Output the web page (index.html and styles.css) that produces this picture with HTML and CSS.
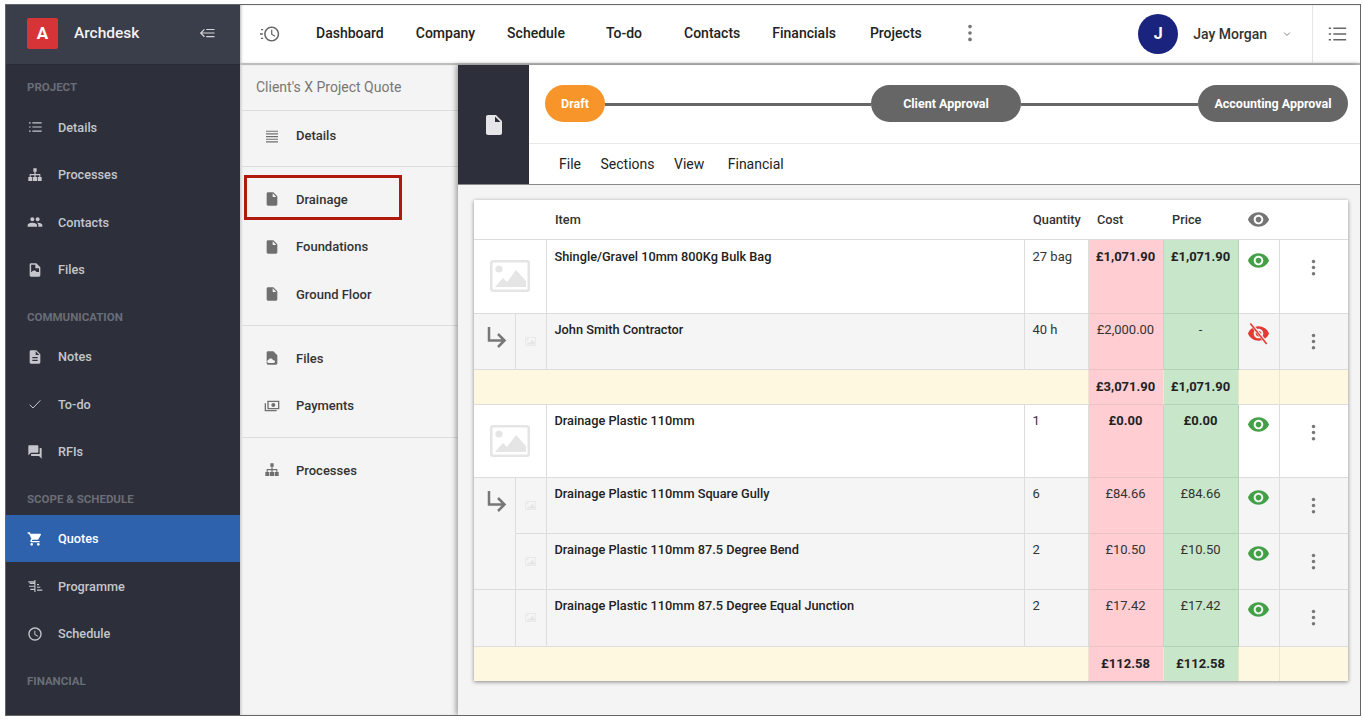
FILE: index.html
```html
<!DOCTYPE html>
<html lang="en">
<head>
    <meta charset="UTF-8">
    <meta name="viewport" content="width=device-width, initial-scale=1.0">
    <title>Archdesk - Quotes</title>
    <link rel="stylesheet" href="styles.css">
</head>
<body>
    <!-- Icon sprite -->
    <svg class="sprite" xmlns="http://www.w3.org/2000/svg">
        <symbol id="i-list" viewBox="0 0 24 24"><path d="M3 5h2.500v1.600H3zM3 11.200h2.500v1.600H3zM3 17.400h2.500V19H3zM8 5h14v1.600H8zM8 11.200h14v1.600H8zM8 17.400h14V19H8z"/></symbol>
        <symbol id="i-lines" viewBox="0 0 24 24"><path d="M3 4h18v1.700H3zM3 8h18v1.700H3zM3 12h18v1.700H3zM3 16h18v1.700H3zM3 20h18v1.700H3z"/></symbol>
        <symbol id="i-org" viewBox="0 0 24 24"><path d="M9.500 2h5v5h-1.600v3.500H20V15h2v6h-6v-6h2.500v-2.800h-5.600V15H15v6H9v-6h2.100v-2.800H5.500V15H8v6H2v-6h2v-4.500h7.100V7H9.500z"/></symbol>
        <symbol id="i-people" viewBox="0 0 24 24"><path d="M16 11c1.660 0 2.990-1.340 2.990-3S17.660 5 16 5c-1.660 0-3 1.340-3 3s1.340 3 3 3zm-8 0c1.660 0 2.990-1.340 2.990-3S9.660 5 8 5C6.340 5 5 6.340 5 8s1.340 3 3 3zm0 2c-2.330 0-7 1.170-7 3.500V19h14v-2.500c0-2.330-4.670-3.500-7-3.500zm8 0c-.29 0-.62.02-.97.05 1.160.84 1.970 1.970 1.970 3.450V19h6v-2.500c0-2.330-4.670-3.500-7-3.500z"/></symbol>
        <symbol id="i-doc" viewBox="0 0 24 24"><path d="M6 2c-1.100 0-1.990.9-1.990 2L4 20c0 1.100.89 2 1.990 2H18c1.100 0 2-.9 2-2V8l-6-6H6zm7 7V3.500L18.500 9H13z"/></symbol>
        <symbol id="i-file-cloud" viewBox="0 0 24 24"><path fill-rule="evenodd" d="M6 2c-1.100 0-2 .9-2 2v16c0 1.100.9 2 2 2h12c1.100 0 2-.9 2-2V8l-6-6H6zm1 17.500c-1.400 0-2.300-1-2.300-2.200 0-1.100.8-2 1.900-2.200.5-1.400 1.800-2.400 3.400-2.400 1.500 0 2.800.9 3.300 2.200 1.800 0 3.300 1.100 3.300 2.500 0 1.200-1 2.100-2.300 2.100H7z"/></symbol>
        <symbol id="i-file-cloud-dark" viewBox="0 0 24 24"><path fill-rule="evenodd" d="M6 2c-1.100 0-2 .9-2 2v16c0 1.100.9 2 2 2h12c1.100 0 2-.9 2-2V8l-6-6H6zm.2 2h6.300v5.500H18V15H6.200z"/><path d="M7.500 20c-1.500 0-2.500-1-2.500-2.300 0-1.200.9-2.100 2-2.300.5-1.500 2-2.600 3.700-2.600 1.700 0 3.100 1 3.600 2.400 1.800 0 3.400 1.100 3.400 2.600 0 1.300-1.100 2.200-2.400 2.200z"/></symbol>
        <symbol id="i-notes" viewBox="0 0 24 24"><path d="M14 2H6c-1.100 0-1.990.9-1.990 2L4 20c0 1.100.89 2 1.990 2H18c1.100 0 2-.9 2-2V8l-6-6zm2 16H8v-2h8v2zm0-4H8v-2h8v2zm-3-5V3.500L18.500 9H13z"/></symbol>
        <symbol id="i-check" viewBox="0 0 24 24"><path d="M4 13l5 5L20 6.500" fill="none" stroke="currentColor" stroke-width="1.500"/></symbol>
        <symbol id="i-forum" viewBox="0 0 24 24"><path d="M21 6h-2v9H6v2c0 .55.45 1 1 1h11l4 4V7c0-.55-.45-1-1-1zm-4 6V3c0-.55-.45-1-1-1H3c-.55 0-1 .45-1 1v14l4-4h10c.55 0 1-.45 1-1z"/></symbol>
        <symbol id="i-cart" viewBox="0 0 24 24"><path d="M7 18c-1.100 0-1.990.9-1.990 2S5.900 22 7 22s2-.9 2-2-.9-2-2-2zM1 2v2h2l3.600 7.590-1.350 2.450c-.16.28-.25.61-.25.96 0 1.100.9 2 2 2h12v-2H7.420c-.14 0-.25-.11-.25-.25l.03-.12.9-1.630h7.450c.75 0 1.410-.41 1.750-1.030l3.580-6.490c.08-.14.12-.31.12-.48 0-.55-.45-1-1-1H5.210l-.94-2H1zm16 16c-1.100 0-1.990.9-1.990 2s.89 2 1.990 2 2-.9 2-2-.9-2-2-2z"/></symbol>
        <symbol id="i-programme" viewBox="0 0 24 24"><path d="M2 5h9V3h1.700v18H11v-3H5v-1.700h6v-3H3V11.600h8V9H4V7.300h7V6.700H2zM15 9h3v1.700h-3zM15 13h5v1.700h-5zM15 17.300h8V19h-8z"/></symbol>
        <symbol id="i-clock" viewBox="0 0 24 24"><path d="M11.990 2C6.470 2 2 6.480 2 12s4.470 10 9.990 10C17.520 22 22 17.520 22 12S17.520 2 11.990 2zM12 20c-4.420 0-8-3.580-8-8s3.580-8 8-8 8 3.580 8 8-3.580 8-8 8zm.5-13H11v6l5.250 3.150.75-1.230-4.500-2.670z"/></symbol>
        <symbol id="i-history" viewBox="0 0 24 24"><path d="M14 3c-5 0-9 4-9 9s4 9 9 9 9-4 9-9-4-9-9-9zm0 16.200c-4 0-7.200-3.200-7.200-7.200S10 4.800 14 4.800s7.200 3.200 7.200 7.200-3.200 7.200-7.200 7.200zm.8-12.200h-1.500v5.700l4.300 2.600.8-1.200-3.600-2.100zM0 11.200h3.500v1.600H0zM1.200 6h2.600v1.600H1.200zM1.200 16.400h2.600V18H1.200z"/></symbol>
        <symbol id="i-collapse" viewBox="0 0 24 24"><path d="M8 6.500L2.500 12 8 17.500l1.100-1.100L5.500 12.800H22v-1.600H5.500l3.600-3.600zM11 6.500h11v1.600H11zM11 15.900h11v1.600H11z"/></symbol>
        <symbol id="i-payments" viewBox="0 0 24 24"><path fill-rule="evenodd" d="M5 4h18v13H5zm9 3.500a3 3 0 1 0 0 6 3 3 0 0 0 0-6zM7 6v9h14V6zM1 8h2v10h16v2H1z"/></symbol>
        <symbol id="i-eye" viewBox="0 0 24 24"><path d="M12 4.500C7 4.500 2.730 7.610 1 12c1.730 4.390 6 7.500 11 7.500s9.270-3.110 11-7.500c-1.730-4.390-6-7.500-11-7.500zM12 17c-2.760 0-5-2.240-5-5s2.240-5 5-5 5 2.240 5 5-2.240 5-5 5zm0-8c-1.660 0-3 1.340-3 3s1.340 3 3 3 3-1.340 3-3-1.340-3-3-3z"/></symbol>
        <symbol id="i-eye-off" viewBox="0 0 24 24"><path d="M12 4.500C7 4.500 2.730 7.610 1 12c1.730 4.390 6 7.500 11 7.500s9.270-3.110 11-7.500c-1.730-4.390-6-7.500-11-7.500zM12 17c-2.760 0-5-2.240-5-5s2.240-5 5-5 5 2.240 5 5-2.240 5-5 5zm0-8c-1.660 0-3 1.340-3 3s1.340 3 3 3 3-1.340 3-3-1.340-3-3-3z"/><path d="M4 1.500L21 23" stroke="#f5f5f5" stroke-width="3.400"/><path d="M3.500 1.500L20.500 23" stroke="currentColor" stroke-width="1.700"/></symbol>
        <symbol id="i-dots" viewBox="0 0 24 24"><circle cx="12" cy="5" r="2"/><circle cx="12" cy="12" r="2"/><circle cx="12" cy="19" r="2"/></symbol>
        <symbol id="i-chevron" viewBox="0 0 24 24"><path d="M5 8.500l7 7 7-7" fill="none" stroke="currentColor" stroke-width="2.200"/></symbol>
        <symbol id="i-image" viewBox="0 0 40 32"><path fill-rule="evenodd" d="M3 0h34a3 3 0 0 1 3 3v26a3 3 0 0 1-3 3H3a3 3 0 0 1-3-3V3a3 3 0 0 1 3-3zm0 2.500a.5.5 0 0 0-.5.5v26a.5.5 0 0 0 .5.500h34a.5.500 0 0 0 .5-.5V3a.5.500 0 0 0-.5-.5z"/><circle cx="9" cy="9" r="3.600"/><path d="M5 27l8-9 4 4 9-12 10 11v6z"/></symbol>
        <symbol id="i-arrow" viewBox="0 0 20 22"><path d="M2 1v13.500h15M11 8l6.500 6.500L11 21" fill="none" stroke="currentColor" stroke-width="2.500"/></symbol>
    </svg>

    <div class="frame">
        <!-- Left navigation -->
        <aside class="sidebar">
            <div class="brand">
                <div class="brand-logo">A</div>
                <div class="brand-name">Archdesk</div>
                <svg class="brand-collapse"><use href="#i-collapse"/></svg>
            </div>
            <nav>
                <div class="nav-label nav-label-first">Project</div>
                <a class="nav-item"><svg class="nav-icon"><use href="#i-list"/></svg>Details</a>
                <a class="nav-item"><svg class="nav-icon"><use href="#i-org"/></svg>Processes</a>
                <a class="nav-item"><svg class="nav-icon"><use href="#i-people"/></svg>Contacts</a>
                <a class="nav-item"><svg class="nav-icon"><use href="#i-file-cloud-dark"/></svg>Files</a>
                <div class="nav-label">Communication</div>
                <a class="nav-item"><svg class="nav-icon"><use href="#i-notes"/></svg>Notes</a>
                <a class="nav-item"><svg class="nav-icon"><use href="#i-check"/></svg>To-do</a>
                <a class="nav-item"><svg class="nav-icon"><use href="#i-forum"/></svg>RFIs</a>
                <div class="nav-label">Scope &amp; Schedule</div>
                <a class="nav-item nav-item-active"><svg class="nav-icon"><use href="#i-cart"/></svg>Quotes</a>
                <a class="nav-item"><svg class="nav-icon"><use href="#i-programme"/></svg>Programme</a>
                <a class="nav-item"><svg class="nav-icon"><use href="#i-clock"/></svg>Schedule</a>
                <div class="nav-label">Financial</div>
            </nav>
        </aside>

        <div class="content">
            <!-- Top bar -->
            <header class="topbar">
                <svg class="topbar-history"><use href="#i-history"/></svg>
                <a class="top-link">Dashboard</a>
                <a class="top-link">Company</a>
                <a class="top-link">Schedule</a>
                <a class="top-link top-link-wide">To-do</a>
                <a class="top-link">Contacts</a>
                <a class="top-link">Financials</a>
                <a class="top-link top-link-last">Projects</a>
                <svg class="topbar-dots"><use href="#i-dots"/></svg>
                <div class="user">
                    <div class="user-avatar">J</div>
                    <div class="user-name">Jay Morgan</div>
                    <svg class="user-chevron"><use href="#i-chevron"/></svg>
                </div>
                <div class="topbar-menu"><svg><use href="#i-list"/></svg></div>
            </header>

            <div class="workspace">
                <!-- Quote sections -->
                <div class="panel">
                    <div class="panel-title">Client's X Project Quote</div>
                    <div class="panel-group panel-group-single">
                        <a class="panel-item"><svg class="panel-icon"><use href="#i-lines"/></svg>Details</a>
                    </div>
                    <div class="panel-group panel-group-sections">
                        <a class="panel-item panel-item-marked"><svg class="panel-icon"><use href="#i-doc"/></svg>Drainage</a>
                        <a class="panel-item"><svg class="panel-icon"><use href="#i-doc"/></svg>Foundations</a>
                        <a class="panel-item"><svg class="panel-icon"><use href="#i-doc"/></svg>Ground Floor</a>
                    </div>
                    <div class="panel-group">
                        <a class="panel-item"><svg class="panel-icon"><use href="#i-file-cloud"/></svg>Files</a>
                        <a class="panel-item"><svg class="panel-icon"><use href="#i-payments"/></svg>Payments</a>
                    </div>
                    <div class="panel-group panel-group-last">
                        <a class="panel-item"><svg class="panel-icon"><use href="#i-org"/></svg>Processes</a>
                    </div>
                </div>

                <main class="main">
                    <div class="quote-head">
                        <div class="quote-badge"><svg><use href="#i-doc"/></svg></div>
                        <div class="quote-bars">
                            <div class="stepper">
                                <div class="step step-draft">Draft</div>
                                <div class="step-line step-line-long"></div>
                                <div class="step">Client Approval</div>
                                <div class="step-line"></div>
                                <div class="step">Accounting Approval</div>
                            </div>
                            <div class="menu">
                                <a>File</a>
                                <a>Sections</a>
                                <a class="menu-view">View</a>
                                <a>Financial</a>
                            </div>
                        </div>
                    </div>

                    <div class="card">
                        <table class="quote-table">
                            <colgroup>
                                <col class="col-indent"><col class="col-thumb"><col class="col-item"><col class="col-qty">
                                <col class="col-money"><col class="col-money"><col class="col-eye"><col class="col-more">
                            </colgroup>
                            <thead>
                                <tr>
                                    <th colspan="2"></th>
                                    <th>Item</th>
                                    <th>Quantity</th>
                                    <th>Cost</th>
                                    <th>Price</th>
                                    <th class="head-eye"><svg class="icon-eye icon-grey"><use href="#i-eye"/></svg></th>
                                    <th></th>
                                </tr>
                            </thead>
                            <tbody>
                                <tr class="row-main row-74">
                                    <td colspan="2" class="thumb-cell"><svg class="thumb-big"><use href="#i-image"/></svg></td>
                                    <td class="item-name">Shingle/Gravel 10mm 800Kg Bulk Bag</td>
                                    <td>27 bag</td>
                                    <td class="cost strong">£1,071.90</td>
                                    <td class="price strong">£1,071.90</td>
                                    <td class="eye-cell"><svg class="icon-eye icon-green"><use href="#i-eye"/></svg></td>
                                    <td class="more-cell"><svg class="icon-more"><use href="#i-dots"/></svg></td>
                                </tr>
                                <tr class="row-sub">
                                    <td class="indent-cell"><svg class="icon-arrow"><use href="#i-arrow"/></svg></td>
                                    <td class="thumb-cell"><svg class="thumb-small"><use href="#i-image"/></svg></td>
                                    <td class="item-name">John Smith Contractor</td>
                                    <td>40 h</td>
                                    <td class="cost">£2,000.00</td>
                                    <td class="price">-</td>
                                    <td class="eye-cell"><svg class="icon-eye icon-red"><use href="#i-eye-off"/></svg></td>
                                    <td class="more-cell"><svg class="icon-more"><use href="#i-dots"/></svg></td>
                                </tr>
                                <tr class="row-total">
                                    <td colspan="4"></td>
                                    <td class="cost strong">£3,071.90</td>
                                    <td class="price strong">£1,071.90</td>
                                    <td></td>
                                    <td></td>
                                </tr>
                                <tr class="row-main">
                                    <td colspan="2" class="thumb-cell"><svg class="thumb-big"><use href="#i-image"/></svg></td>
                                    <td class="item-name">Drainage Plastic 110mm</td>
                                    <td>1</td>
                                    <td class="cost strong">£0.00</td>
                                    <td class="price strong">£0.00</td>
                                    <td class="eye-cell"><svg class="icon-eye icon-green"><use href="#i-eye"/></svg></td>
                                    <td class="more-cell"><svg class="icon-more"><use href="#i-dots"/></svg></td>
                                </tr>
                                <tr class="row-sub">
                                    <td class="indent-cell indent-open"><svg class="icon-arrow"><use href="#i-arrow"/></svg></td>
                                    <td class="thumb-cell"><svg class="thumb-small"><use href="#i-image"/></svg></td>
                                    <td class="item-name">Drainage Plastic 110mm Square Gully</td>
                                    <td>6</td>
                                    <td class="cost">£84.66</td>
                                    <td class="price">£84.66</td>
                                    <td class="eye-cell"><svg class="icon-eye icon-green"><use href="#i-eye"/></svg></td>
                                    <td class="more-cell"><svg class="icon-more"><use href="#i-dots"/></svg></td>
                                </tr>
                                <tr class="row-sub">
                                    <td class="indent-cell indent-cont"></td>
                                    <td class="thumb-cell"><svg class="thumb-small"><use href="#i-image"/></svg></td>
                                    <td class="item-name">Drainage Plastic 110mm 87.5 Degree Bend</td>
                                    <td>2</td>
                                    <td class="cost">£10.50</td>
                                    <td class="price">£10.50</td>
                                    <td class="eye-cell"><svg class="icon-eye icon-green"><use href="#i-eye"/></svg></td>
                                    <td class="more-cell"><svg class="icon-more"><use href="#i-dots"/></svg></td>
                                </tr>
                                <tr class="row-sub row-57">
                                    <td class="indent-cell"></td>
                                    <td class="thumb-cell"><svg class="thumb-small"><use href="#i-image"/></svg></td>
                                    <td class="item-name">Drainage Plastic 110mm 87.5 Degree Equal Junction</td>
                                    <td>2</td>
                                    <td class="cost">£17.42</td>
                                    <td class="price">£17.42</td>
                                    <td class="eye-cell"><svg class="icon-eye icon-green"><use href="#i-eye"/></svg></td>
                                    <td class="more-cell"><svg class="icon-more"><use href="#i-dots"/></svg></td>
                                </tr>
                                <tr class="row-total">
                                    <td colspan="4"></td>
                                    <td class="cost strong">£112.58</td>
                                    <td class="price strong">£112.58</td>
                                    <td></td>
                                    <td></td>
                                </tr>
                            </tbody>
                        </table>
                    </div>
                </main>
            </div>
        </div>
    </div>
</body>
</html>
```

FILE: styles.css
```css
* {
    box-sizing: border-box;
}
body {
    margin: 0;
    background-color: white;
    font-family: Roboto, "Liberation Sans", sans-serif;
    color: #222;
    overflow: hidden;
}
svg {
    fill: currentColor;
    flex: none;
    display: block;
}
.sprite {
    display: none;
}
.frame {
    display: flex;
    width: 1356px;
    height: 712px;
    margin: 4px 0 0 5px;
    border: 1px solid #666;
    overflow: hidden;
}

/* Left navigation */
.sidebar {
    width: 234px;
    flex: none;
    background-color: #2d303b;
    color: #c4c6cb;
    position: relative;
    z-index: 2;
}
.brand {
    display: flex;
    align-items: center;
    height: 60px;
    padding: 0 0 3px 21px;
    background-color: #3a3e4a;
    border-bottom: 1px solid #292c35;
}
.brand-logo {
    width: 31px;
    height: 31px;
    border-radius: 2px;
    background-color: #d63437;
    color: white;
    font-size: 17px;
    font-weight: 700;
    line-height: 31px;
    text-align: center;
}
.brand-name {
    margin-left: 16px;
    width: 124px;
    font-size: 15.5px;
    font-weight: 500;
    color: #f2f2f2;
}
.brand-collapse {
    width: 18px;
    height: 18px;
    color: #d5d6da;
}
.nav-label {
    height: 39.5px;
    padding: 15.5px 0 0 21px;
    font-size: 11.5px;
    line-height: 16px;
    font-weight: 700;
    text-transform: uppercase;
    color: #6a6d77;
}
.nav-label-first {
    height: 38.25px;
    padding-top: 14px;
}
.nav-item {
    display: flex;
    align-items: center;
    height: 47.5px;
    padding: 0 0 0 21px;
    font-size: 12.7px;
    font-weight: 500;
}
.nav-item-active {
    background-color: #2e62ad;
    color: white;
}
.nav-icon {
    width: 16px;
    height: 16px;
    margin-right: 15px;
}

/* Top bar */
.content {
    flex: 1;
    min-width: 0;
    display: flex;
    flex-direction: column;
}
.topbar {
    display: flex;
    align-items: center;
    height: 60px;
    flex: none;
    padding-left: 19px;
    background-color: white;
    border-bottom: 2px solid #bdbdbd;
    box-shadow: inset 2px 0 3px -1px rgba(0, 0, 0, 0.3);
}
.topbar-history {
    width: 22px;
    height: 20px;
    color: #666;
    margin: -1px 35px 0 0;
}
.top-link {
    margin: -2px 32px 0 0;
    font-size: 14px;
    font-weight: 500;
    color: #222;
}
.top-link-wide {
    margin: -2px 42px 0 9px;
}
.top-link-last {
    margin-left: 2px;
    margin-right: 37px;
}
.topbar-dots {
    width: 22px;
    height: 22px;
    margin-top: -2px;
    color: #777;
}
.user {
    display: flex;
    align-items: center;
    margin-left: auto;
}
.user-avatar {
    width: 40px;
    height: 40px;
    border-radius: 50%;
    background-color: #1a237e;
    color: white;
    font-size: 16px;
    font-weight: 700;
    line-height: 40px;
    text-align: center;
}
.user-name {
    margin-left: 15px;
    font-size: 14px;
    font-weight: 500;
    color: #333;
}
.user-chevron {
    width: 10px;
    height: 10px;
    margin: 0 20px 0 15px;
    color: #777;
}
.topbar-menu {
    display: flex;
    align-items: center;
    justify-content: center;
    width: 48px;
    height: 100%;
    border-left: 1px solid #e5e5e5;
    color: #666;
}
.topbar-menu svg {
    width: 22px;
    height: 22px;
}

/* Quote sections */
.workspace {
    flex: 1;
    min-height: 0;
    display: flex;
}
.panel {
    width: 218px;
    flex: none;
    background-color: #f4f4f4;
    box-shadow: inset 2px 0 3px -1px rgba(0, 0, 0, 0.2);
}
.panel-title {
    height: 46px;
    padding: 14px 0 0 16px;
    font-size: 14px;
    line-height: 16px;
    color: #777;
    border-bottom: 1px solid #ddd;
}
.panel-group {
    padding: 9px 0 7px;
    border-bottom: 1px solid #ddd;
}
.panel-group-single {
    padding: 1px 0 0;
    height: 56px;
}
.panel-group-sections {
    padding: 8.5px 0 6.5px;
}
.panel-group-last {
    border-bottom: 0;
}
.panel-item {
    display: flex;
    align-items: center;
    height: 47.5px;
    padding-left: 24px;
    font-size: 13px;
    font-weight: 500;
    color: #333;
    position: relative;
}
.panel-icon {
    width: 16px;
    height: 16px;
    margin-right: 16px;
    color: #6f6f6f;
}
.panel-item-marked::after {
    content: "";
    box-sizing: border-box;
    position: absolute;
    left: 4px;
    top: -1px;
    width: 158px;
    height: 45px;
    border: 3px solid #b01a0c;
}

/* Quote header */
.main {
    flex: 1;
    min-width: 0;
    padding-bottom: 34px;
    background-color: #f4f4f4;
    box-shadow: -2px 0 5px rgba(0, 0, 0, 0.35);
    position: relative;
}
.quote-head {
    display: flex;
    height: 120px;
    border-bottom: 1px solid #888;
    background-color: white;
}
.quote-badge {
    display: flex;
    align-items: center;
    justify-content: center;
    width: 71px;
    flex: none;
    background-color: #2d303b;
    color: #e6e6e8;
}
.quote-badge svg {
    width: 24px;
    height: 24px;
}
.quote-bars {
    flex: 1;
    min-width: 0;
}
.stepper {
    display: flex;
    align-items: center;
    height: 79px;
    padding: 0 12px 2px 16px;
    border-bottom: 1px solid #e8e8e8;
}
.step {
    width: 150px;
    height: 37px;
    flex: none;
    border-radius: 19px;
    background-color: #666;
    color: white;
    font-size: 12.5px;
    font-weight: 700;
    line-height: 37px;
    text-align: center;
}
.step-draft {
    width: 60px;
    background-color: #f7952b;
}
.step-line {
    flex: 1;
    height: 3px;
    margin-top: 3px;
    background-color: #666;
}
.step-line-long {
    flex: none;
    width: 266px;
}
.menu {
    display: flex;
    align-items: center;
    gap: 19.5px;
    height: 40px;
    padding-left: 30px;
    font-size: 14px;
    color: #222;
}
.menu-view {
    margin-right: 4px;
}

/* Items table */
.card {
    margin: 15px 12px 0 16px;
    background-color: white;
    box-shadow: 0 1px 4px rgba(0, 0, 0, 0.45);
}
.quote-table {
    width: 874px;
    table-layout: fixed;
    border-collapse: collapse;
    font-size: 13px;
    line-height: 16px;
}
.col-indent { width: 41px; }
.col-thumb { width: 31px; }
.col-item { width: 478px; }
.col-qty { width: 64px; }
.col-money { width: 75px; }
.col-eye { width: 41px; }
.col-more { width: 69px; }
.quote-table th {
    height: 39px;
    padding: 1px 0 0 9px;
    text-align: left;
    font-size: 12.75px;
    font-weight: 500;
    border-bottom: 1px solid #ddd;
    color: #333;
}
.quote-table .head-eye {
    padding: 0;
}
.quote-table td {
    padding: 8.5px 8px 0 8px;
    vertical-align: top;
    border: 1px solid #ddd;
    color: #333;
}
.quote-table tr > :first-child {
    border-left: 0;
}
.quote-table tr > :last-child {
    border-right: 0;
}
.quote-table .eye-cell {
    padding: 8.5px 0 0;
}
.quote-table .row-74 td {
    padding-top: 9px;
}
.row-main {
    height: 73px;
}
.row-74 {
    height: 74px;
}
.row-sub {
    height: 56px;
    background-color: #f5f5f5;
}
.row-57 {
    height: 57px;
}
.row-total {
    height: 35px;
    background-color: #fff8e1;
}
.quote-table .row-total td {
    padding-top: 9px;
    border-color: #eee6cc;
    border-bottom: 0;
}
.quote-table .item-name {
    font-size: 12.75px;
    font-weight: 500;
    color: #222;
}
.quote-table .cost,
.quote-table .price {
    padding-left: 0;
    padding-right: 0;
    text-align: center;
}
.quote-table .cost {
    background-color: #ffcdd2;
    border-color: #e8c2c6;
}
.quote-table .price {
    background-color: #c8e6c9;
    border-color: #b0d3b2;
}
.quote-table .strong {
    font-weight: 700;
    color: #222;
}
.quote-table .thumb-cell,
.quote-table .row-74 .thumb-cell {
    padding: 0;
    vertical-align: middle;
    color: #e5e5e5;
}
.thumb-big {
    width: 40px;
    height: 32px;
    margin: 0 auto;
}
.thumb-small {
    width: 11px;
    height: 9px;
    margin: 0 auto;
}
.quote-table .indent-cell {
    padding: 12.5px 0 0 13px;
    color: #777;
}
.quote-table .indent-open {
    border-bottom: 0;
}
.quote-table .indent-cont {
    border-top: 0;
}
.icon-arrow {
    width: 20px;
    height: 22px;
}
.icon-eye {
    width: 23px;
    height: 23px;
    margin: 0 auto;
}
.icon-grey { color: #757575; }
.icon-green { color: #43a047; }
.icon-red { color: #e53935; }
.quote-table .more-cell,
.quote-table .row-74 .more-cell {
    padding: 17px 9px 0 9px;
    color: #777;
}
.icon-more {
    width: 21px;
    height: 21px;
    margin: 0 auto;
}
```
